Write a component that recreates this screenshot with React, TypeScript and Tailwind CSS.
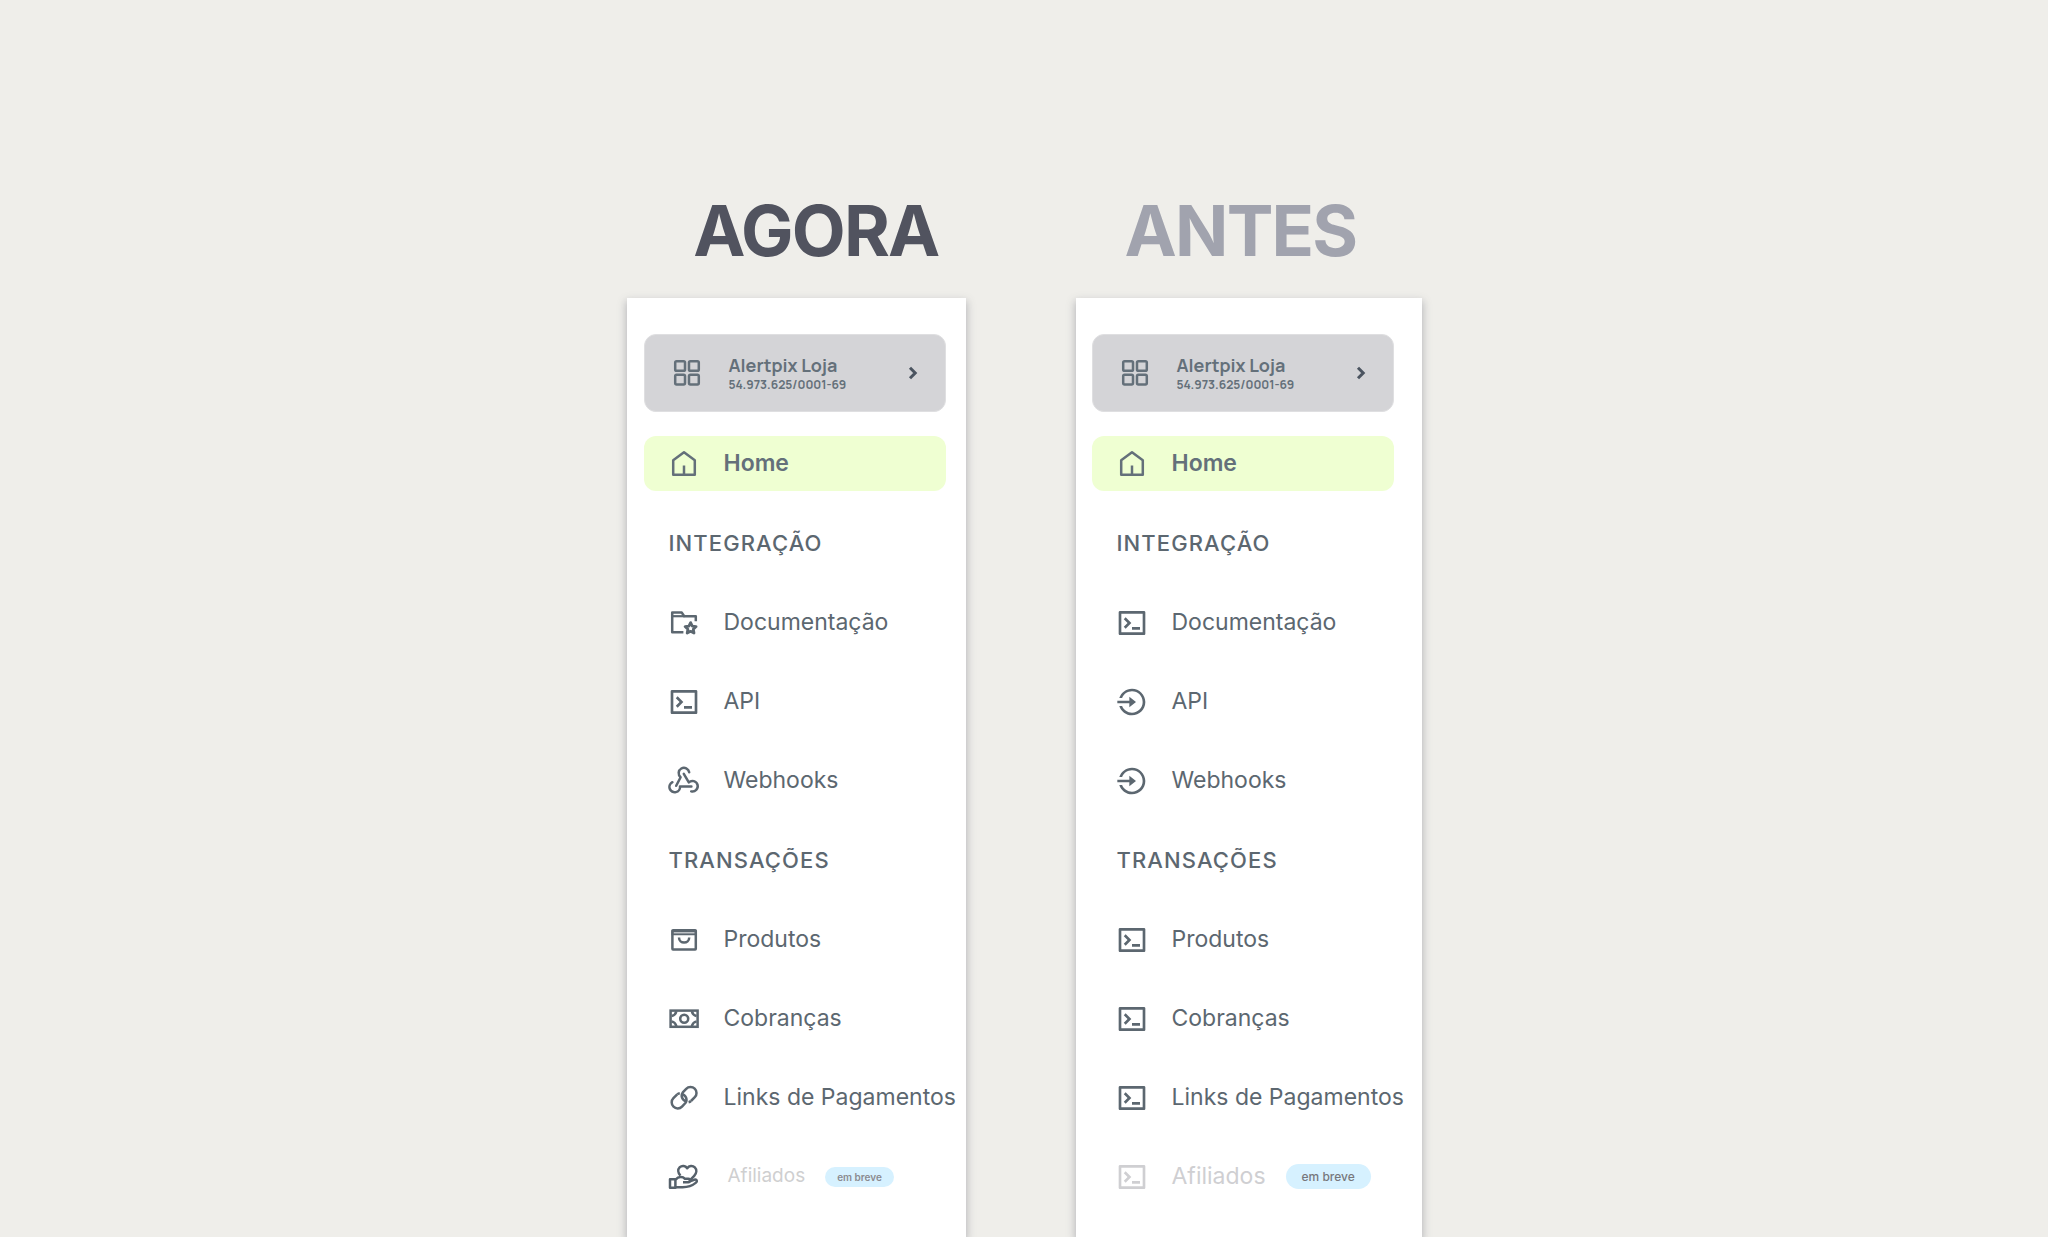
import type { ComponentType, ReactNode } from 'react'
import { RiLoginCircleLine, RiTerminalBoxLine } from 'react-icons/ri'

type IconProps = { className?: string }

type NavItem = {
  label: string
  icon: ComponentType<IconProps>
}

function Svg({ className, children }: { className?: string; children: ReactNode }) {
  return (
    <svg
      viewBox="0 0 32 32"
      fill="none"
      stroke="currentColor"
      strokeWidth="2.5"
      strokeLinejoin="round"
      className={className}
      aria-hidden="true"
    >
      {children}
    </svg>
  )
}

function GridIcon({ className }: IconProps) {
  return (
    <Svg className={className}>
      <rect x="4.2" y="4.2" width="9.8" height="9.6" rx="1.4" />
      <rect x="18" y="4.2" width="9.8" height="9.6" rx="1.4" />
      <rect x="4.2" y="17.8" width="9.8" height="9.6" rx="1.4" />
      <rect x="18" y="17.8" width="9.8" height="9.6" rx="1.4" />
    </Svg>
  )
}

function HomeIcon({ className }: IconProps) {
  return (
    <Svg className={className}>
      <path d="M5.2 12.2 16 4.2l10.8 8v14.6H5.2z" />
      <path d="M16 17.5v8.5" />
    </Svg>
  )
}

function FolderStarIcon({ className }: IconProps) {
  return (
    <Svg className={className}>
      <path d="M15.4 25.2H4.2V5.6h9.6l2.4 3.6h11.6v5" />
      <path d="M4.4 9.2h12" strokeWidth="2.2" />
      <path
        d="m22.6 15.6 1.7 3.5 3.8.5-2.8 2.7.7 3.8-3.4-1.8-3.4 1.8.7-3.8-2.8-2.7 3.8-.5z"
        strokeWidth="2.8"
      />
    </Svg>
  )
}

function WebhookIcon({ className }: IconProps) {
  return (
    <Svg className={className}>
      <path d="M21.2 7.2a5.3 5.3 0 1 0-8.6 5L8.2 20.8" strokeLinecap="round" />
      <path d="M15.8 8.8l5 8.6a5.3 5.3 0 1 1 2.4 9" strokeLinecap="round" />
      <path d="M4.4 17.2a5.3 5.3 0 1 0 7.600 4.200h11.400" strokeLinecap="round" />
    </Svg>
  )
}

function BoxIcon({ className }: IconProps) {
  return (
    <Svg className={className}>
      <rect x="4.4" y="6.2" width="23.4" height="19.2" rx=".6" />
      <path d="M4.4 7h23.4v3.4H4.4z" fill="currentColor" fillOpacity=".4" strokeWidth="1.8" />
      <path d="M11 13.4c0 6.8 10.2 6.8 10.2 0" />
    </Svg>
  )
}

function MoneyIcon({ className }: IconProps) {
  return (
    <Svg className={className}>
      <rect x="2.6" y="7.6" width="27" height="16.2" strokeLinejoin="miter" />
      <circle cx="16.2" cy="15.7" r="4" />
      <path d="M3.6 13c2.6-.6 4.2-2.2 4.8-4.8M28.6 13c-2.6-.6-4.2-2.2-4.8-4.8M3.6 18.4c2.6.6 4.2 2.2 4.8 4.8M28.6 18.4c-2.6.6-4.2 2.2-4.8 4.8" />
    </Svg>
  )
}

function LinkIcon({ className }: IconProps) {
  return (
    <Svg className={className}>
      <path d="M18.2 19.2a5.600 5.600 0 0 1-3.400-8.800l3.400-3.600a6 6 0 0 1 8.600 8.400l-3.800 3.800" />
      <path d="M14 12.200a5.600 5.600 0 0 1 3.400 8.800L14 24.600a6 6 0 0 1-8.600-8.400l3.800-3.800" />
      <path d="M9.200 12.400a5.600 5.600 0 0 1 2.600-1.200M23 19a5.600 5.600 0 0 1-2.400 1.200" />
    </Svg>
  )
}

function HandHeartIcon({ className }: IconProps) {
  return (
    <Svg className={className}>
      <path d="M12.4 14.6c-2.600-2.800-2.800-6.200-.6-8.400 2.200-2 5.600-1.600 7.400 1 1.800-2.600 5.400-3 7.600-.8 2.200 2.200 2 5.600-.6 8.400l-3.600 3.800" />
      <path d="M7.600 18.600c3-3.400 7-3.400 9.400-.8h3.400c2.200 0 2.200 3.400 0 3.400h-5.400M20.600 20.800l6.200-2.200c2-.4 2.800 1.800 1.200 3-3.600 3-8.600 4.600-13.400 4.600H7.600" />
      <path d="M2 18.200h5.400v8.600H2z" />
    </Svg>
  )
}

function ChevronIcon({ className }: IconProps) {
  return (
    <svg viewBox="0 0 16 16" fill="none" stroke="currentColor" strokeWidth="3" className={className} aria-hidden="true">
      <path d="m5 2.8 5.2 5.2L5 13.2" />
    </svg>
  )
}

const NOW_INTEGRATION: NavItem[] = [
  { label: 'Documentação', icon: FolderStarIcon },
  { label: 'API', icon: RiTerminalBoxLine },
  { label: 'Webhooks', icon: WebhookIcon },
]

const NOW_TRANSACTIONS: NavItem[] = [
  { label: 'Produtos', icon: BoxIcon },
  { label: 'Cobranças', icon: MoneyIcon },
  { label: 'Links de Pagamentos', icon: LinkIcon },
]

const BEFORE_INTEGRATION: NavItem[] = [
  { label: 'Documentação', icon: RiTerminalBoxLine },
  { label: 'API', icon: RiLoginCircleLine },
  { label: 'Webhooks', icon: RiLoginCircleLine },
]

const BEFORE_TRANSACTIONS: NavItem[] = [
  { label: 'Produtos', icon: RiTerminalBoxLine },
  { label: 'Cobranças', icon: RiTerminalBoxLine },
  { label: 'Links de Pagamentos', icon: RiTerminalBoxLine },
]

function AccountButton() {
  return (
    <button
      type="button"
      className="flex h-[78px] items-center rounded-xl border border-[#dfdfe1] bg-[#d4d4d7] pr-6 pl-[26px] text-left text-[#64707a]"
    >
      <GridIcon className="size-8 shrink-0" />
      <span className="ml-[26px] flex flex-1 flex-col pt-1 font-['Manrope','Inter',sans-serif]">
        <span className="text-lg leading-5 font-bold">Alertpix Loja</span>
        <span className="text-xs leading-5 font-bold">54.973.625/0001-69</span>
      </span>
      <ChevronIcon className="size-4 shrink-0 text-[#4b5460]" />
    </button>
  )
}

function NavSection({ title, items }: { title: string; items: NavItem[] }) {
  return (
    <>
      <h3 className="flex h-14 items-center pl-[25px] text-[22px] font-medium tracking-wider text-[#5c6770]">
        {title}
      </h3>
      {items.map(({ label, icon: Icon }) => (
        <a key={label} href="#" className="flex h-[55px] items-center gap-6 pl-6 text-[#5c6770]">
          <Icon className="size-8 shrink-0" />
          <span className="text-[23px] whitespace-nowrap">{label}</span>
        </a>
      ))}
    </>
  )
}

type SidebarProps = {
  integration: NavItem[]
  transactions: NavItem[]
  className: string
  children: ReactNode
}

function Sidebar({ integration, transactions, className, children }: SidebarProps) {
  return (
    <nav
      className={`flex flex-1 flex-col gap-6 bg-white pt-9 shadow-[0_4px_8px_1px_rgba(80,82,100,0.35)] ${className}`}
    >
      <AccountButton />
      <a
        href="#"
        aria-current="page"
        className="flex h-[55px] items-center gap-6 rounded-xl bg-[#efffd2] pl-6 text-[#64707a]"
      >
        <HomeIcon className="size-8 shrink-0" />
        <span className="text-[23px] font-semibold">Home</span>
      </a>
      <NavSection title="INTEGRAÇÃO" items={integration} />
      <NavSection title="TRANSAÇÕES" items={transactions} />
      {children}
    </nav>
  )
}

export default function App() {
  return (
    <main className="flex min-h-screen justify-center gap-[110px] overflow-hidden bg-[#efeeea] pt-[189px] font-['Inter',sans-serif]">
      <section className="flex w-[339px] flex-col">
        <h2 className="mb-[25px] pl-10 text-center text-[70px] leading-[84px] font-bold tracking-tight text-[#51535f]">
          AGORA
        </h2>
        <Sidebar integration={NOW_INTEGRATION} transactions={NOW_TRANSACTIONS} className="pr-5 pl-[17px]">
          <a href="#" className="flex h-[55px] items-center pl-6">
            <HandHeartIcon className="size-8 shrink-0 text-[#56616b]" />
            <span className="ml-7 text-[19px] text-[#cfcfd0]">Afiliados</span>
            <span className="ml-5 rounded-full bg-[#d6f1ff] px-3 text-[10px] leading-5 font-semibold text-[#8b8b90]">
              em breve
            </span>
          </a>
        </Sidebar>
      </section>

      <section className="flex w-[346px] flex-col">
        <h2 className="mb-[25px] pr-4 text-center text-[70px] leading-[84px] font-bold tracking-tight text-[#a1a3ae]">
          ANTES
        </h2>
        <Sidebar integration={BEFORE_INTEGRATION} transactions={BEFORE_TRANSACTIONS} className="pr-7 pl-4">
          <a href="#" className="flex h-[55px] items-center pl-6 text-[#cfcfd2]">
            <RiTerminalBoxLine className="size-8 shrink-0" />
            <span className="ml-6 text-[23px]">Afiliados</span>
            <span className="ml-5 rounded-full bg-[#d6f1ff] px-4 text-xs leading-[25px] font-medium text-[#77777c]">
              em breve
            </span>
          </a>
        </Sidebar>
      </section>
    </main>
  )
}
